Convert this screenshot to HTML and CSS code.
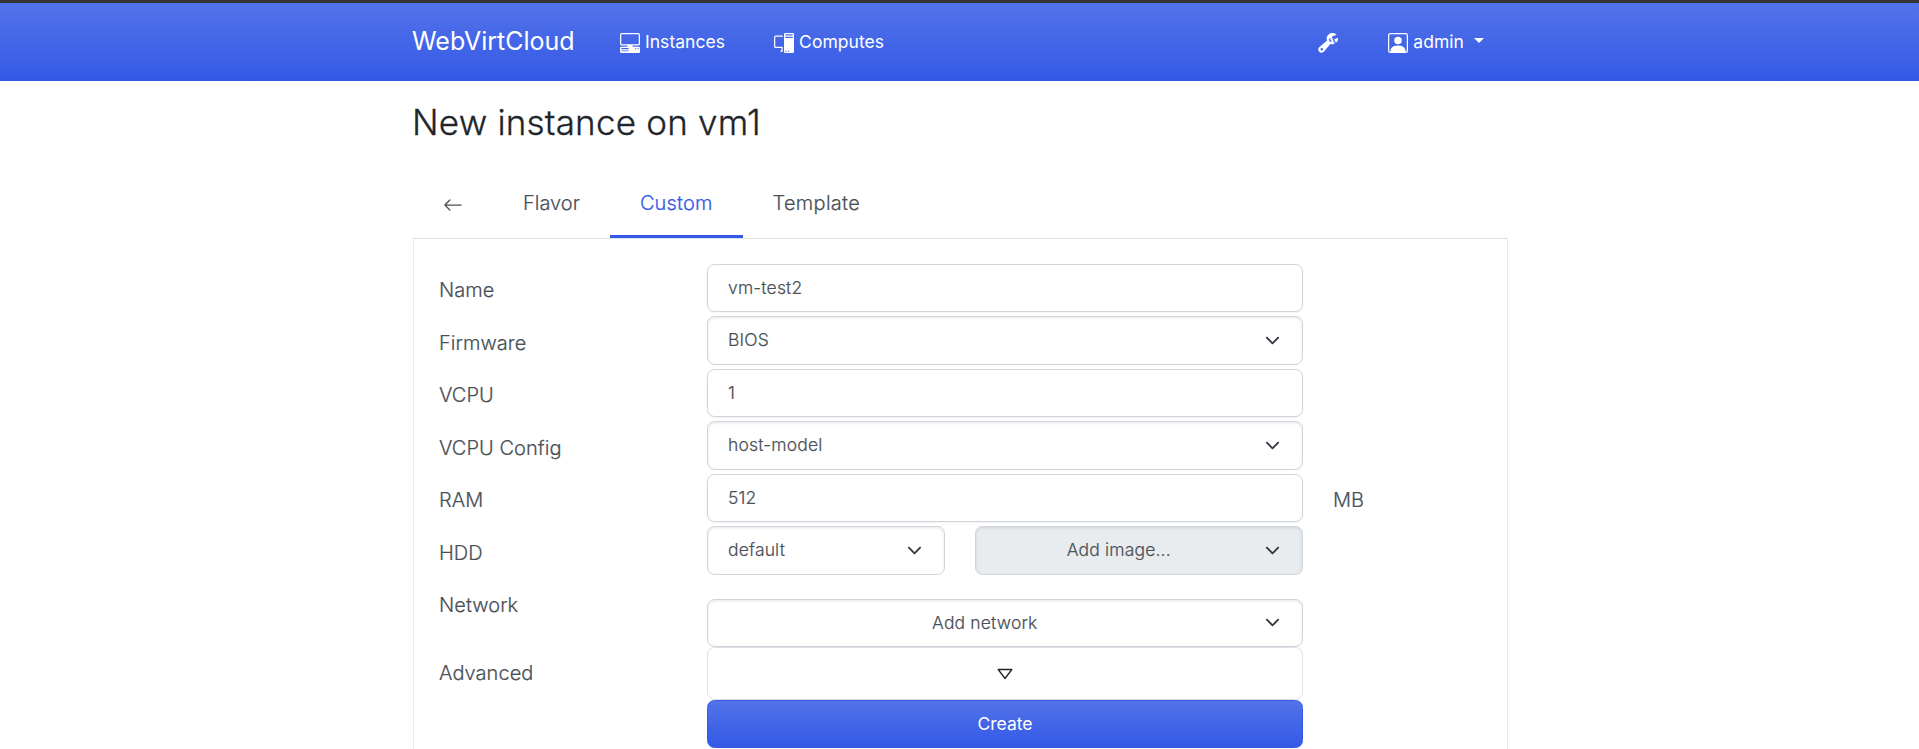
FILE: index.html
```
<!DOCTYPE html>
<html lang="en">
<head>
<meta charset="utf-8">
<title>WebVirtCloud</title>
<link rel="stylesheet" href="styles.css">
</head>
<body>
<svg class="defs" width="0" height="0">
  <symbol id="chevron" viewBox="0 0 16 16"><path fill="none" stroke="#343a40" stroke-linecap="round" stroke-linejoin="round" stroke-width="2" d="m2 5 6 6 6-6"/></symbol>
</svg>
<nav class="navbar">
  <div class="container nav-inner">
    <a class="brand">WebVirtCloud</a>
    <a class="nav-item">
      <svg class="icon" viewBox="0 0 16 16" fill="currentColor"><path d="M1.500 0A1.500 1.500 0 0 0 0 1.500v7A1.500 1.500 0 0 0 1.500 10H6v1H1a1 1 0 0 0-1 1v3a1 1 0 0 0 1 1h14a1 1 0 0 0 1-1v-3a1 1 0 0 0-1-1h-5v-1h4.500A1.500 1.500 0 0 0 16 8.500v-7A1.500 1.500 0 0 0 14.500 0zm0 1h13a.5.5 0 0 1 .5.5v7a.5.5 0 0 1-.5.5h-13a.5.5 0 0 1-.5-.5v-7a.5.5 0 0 1 .5-.5M12 12.500a.5.5 0 1 1 1 0 .5.5 0 0 1-1 0m2 0a.5.5 0 1 1 1 0 .5.5 0 0 1-1 0M1.500 12h5a.5.5 0 0 1 0 1h-5a.5.5 0 0 1 0-1M1 14.250a.25.25 0 0 1 .25-.25h5.500a.25.25 0 1 1 0 .5h-5.500a.25.25 0 0 1-.25-.25"/></svg>
      <span>Instances</span>
    </a>
    <a class="nav-item">
      <svg class="icon" viewBox="0 0 16 16" fill="currentColor"><path d="M8 1a1 1 0 0 1 1-1h6a1 1 0 0 1 1 1v14a1 1 0 0 1-1 1H9a1 1 0 0 1-1-1zm1 13.500a.5.5 0 1 0 1 0 .5.5 0 0 0-1 0m2 0a.5.5 0 1 0 1 0 .5.5 0 0 0-1 0M9.500 1a.5.5 0 0 0 0 1h5a.5.5 0 0 0 0-1zM9 3.500a.5.5 0 0 0 .5.5h5a.5.5 0 0 0 0-1h-5a.5.5 0 0 0-.5.5M1.500 2A1.500 1.500 0 0 0 0 3.500v7A1.500 1.500 0 0 0 1.500 12H6v2h-.5a.5.5 0 0 0 0 1H7v-4H1.500a.5.5 0 0 1-.5-.5v-7a.5.5 0 0 1 .5-.5H7V2z"/></svg>
      <span>Computes</span>
    </a>
    <a class="nav-item tools">
      <svg class="icon" viewBox="0 0 16 16" fill="currentColor"><path d="M16 4.500a4.500 4.500 0 0 1-1.703 3.526L13 5l2.959-1.110q.04.3.041.61"/><path d="M11.500 9c.653 0 1.273-.139 1.833-.39L12 5.500 11 3l3.826-1.530A4.500 4.500 0 0 0 7.290 6.092l-6.116 5.096a2.583 2.583 0 1 0 3.638 3.638L9.908 8.710A4.500 4.500 0 0 0 11.500 9m-1.292-4.361-.596.893.809-.270a.25.25 0 0 1 .287.377l-.596.893.809-.270.158.475-1.500.5a.25.25 0 0 1-.287-.376l.596-.893-.809.270a.25.25 0 0 1-.287-.377l.596-.893-.809.270-.158-.475 1.500-.5a.25.25 0 0 1 .287.376M3 14a1 1 0 1 1 0-2 1 1 0 0 1 0 2"/></svg>
    </a>
    <a class="nav-item">
      <svg class="icon" viewBox="0 0 16 16" fill="currentColor"><path d="M11 6a3 3 0 1 1-6 0 3 3 0 0 1 6 0"/><path d="M2 0a2 2 0 0 0-2 2v12a2 2 0 0 0 2 2h12a2 2 0 0 0 2-2V2a2 2 0 0 0-2-2zm12 1a1 1 0 0 1 1 1v12a1 1 0 0 1-1 1v-1c0-1-1-4-6-4s-6 3-6 4v1a1 1 0 0 1-1-1V2a1 1 0 0 1 1-1z"/></svg>
      <span>admin</span><i class="caret"></i>
    </a>
  </div>
</nav>
<main class="container">
  <h1 class="title">New instance on vm1</h1>
  <ul class="tabs">
    <li class="tab back"><svg class="icon" viewBox="0 0 16 16" fill="currentColor"><path fill-rule="evenodd" d="M15 8a.5.5 0 0 0-.5-.5H2.707l3.147-3.146a.5.5 0 1 0-.708-.708l-4 4a.5.5 0 0 0 0 .708l4 4a.5.5 0 0 0 .708-.708L2.707 8.500H14.500A.5.5 0 0 0 15 8"/></svg></li>
    <li class="tab">Flavor</li>
    <li class="tab active">Custom</li>
    <li class="tab">Template</li>
  </ul>
  <form class="panel">
    <div class="row"><label>Name</label><div class="control">vm-test2</div></div>
    <div class="row"><label>Firmware</label><div class="control select"><span>BIOS</span><svg class="chevron"><use href="#chevron"/></svg></div></div>
    <div class="row"><label>VCPU</label><div class="control">1</div></div>
    <div class="row"><label>VCPU Config</label><div class="control select"><span>host-model</span><svg class="chevron"><use href="#chevron"/></svg></div></div>
    <div class="row"><label>RAM</label><div class="control">512</div><span class="unit">MB</span></div>
    <div class="row"><label>HDD</label>
      <div class="split">
        <div class="control select"><span>default</span><svg class="chevron"><use href="#chevron"/></svg></div>
        <div class="control select centered disabled"><span>Add image...</span><svg class="chevron"><use href="#chevron"/></svg></div>
      </div>
    </div>
    <div class="row network"><label>Network</label><div class="control select centered"><span>Add network</span><svg class="chevron"><use href="#chevron"/></svg></div></div>
    <div class="row advanced"><label>Advanced</label>
      <div class="toggle"><svg class="triangle" viewBox="0 0 16 16"><path d="M1.200 3.500h13.600L8 12.500z" fill="none" stroke="#212529" stroke-width="1.300" stroke-linejoin="round"/></svg></div>
    </div>
    <div class="row submit"><span></span><div class="create">Create</div></div>
  </form>
</main>
</body>
</html>
```
FILE: styles.css
```
* { box-sizing: border-box; }
html { font-size: 20px; overflow: hidden; }
body {
  margin: 0;
  height: 749px;
  overflow: hidden;
  font-family: Inter, "Liberation Sans", sans-serif;
  font-weight: 300;
  line-height: 1.5;
  color: #495057;
  background: #fff;
}
.defs { display: block; height: 0; }
.container { width: 1095px; margin-left: 413px; }
.navbar {
  height: 81px;
  border-top: 3px solid #343434;
  background: linear-gradient(180deg, #5273e9, #3459e6);
  color: #fff;
}
.nav-inner { display: flex; align-items: center; height: 78px; }
.brand { font-size: 25px; font-weight: 400; width: 207px; margin-left: -1px; }
.nav-item {
  display: flex;
  align-items: center;
  gap: 5px;
  font-size: 17.5px;
  font-weight: 400;
  letter-spacing: 0.04px;
  margin-right: 49px;
}
.nav-inner .brand + .nav-item { margin-left: 1px; }
.icon { display: block; width: 20px; height: 20px; position: relative; top: 1px; }
.tools { margin-left: auto; }
.nav-inner .tools { margin-right: 50px; }
.nav-item:last-child { margin-right: 24px; }
.caret {
  margin-left: 5px;
  border-top: 5px solid #fff;
  border-left: 5px solid transparent;
  border-right: 5px solid transparent;
  position: relative;
  top: -2px;
}
.title {
  margin: 20px 0 0 -1px;
  height: 43px;
  line-height: 43px;
  font-size: 35px;
  font-weight: 300;
  letter-spacing: 0.2px;
  -webkit-text-stroke: 0.3px;
  color: #212529;
}
.tabs {
  display: flex;
  list-style: none;
  margin: 28px 0 0;
  padding: 0;
  height: 67px;
  border-bottom: 1px solid #dee2e6;
}
.tab {
  padding: 16px 30px 0;
  height: 66px;
  border-bottom: 3px solid transparent;
  letter-spacing: 0.15px;
  -webkit-text-stroke: 0.2px;
}
.tab:nth-child(2) { letter-spacing: 0; }
.tab:last-child { letter-spacing: 0.28px; }
.back .icon { top: 7px; }
.active { color: #3459e6; border-color: #3459e6; }
.panel {
  height: 530px;
  padding: 25px 25px 0;
  border: 1px solid #e9ecef;
  border-top: 0;
}
.row { display: grid; grid-template-columns: 268px 596px 1fr; align-items: start; height: 52.5px; }
.row label { padding-top: 11px; letter-spacing: 0.05px; -webkit-text-stroke: 0.2px; }
.unit { padding: 11px 0 0 30px; -webkit-text-stroke: 0.2px; }
.control {
  display: flex;
  align-items: center;
  height: 48px;
  padding: 0 20px;
  font-size: 17.5px;
  letter-spacing: 0.15px;
  -webkit-text-stroke: 0.2px;
  border: 1px solid #ced4da;
  border-radius: 7.5px;
  box-shadow: 0 1px 2px rgba(0, 0, 0, .05);
}
.select { height: 49px; margin-top: -0.500px; padding-bottom: 1px; box-shadow: inset 0 1px 3px rgba(0, 0, 0, .1); }
.select span { flex: 1; }
.chevron { width: 15px; height: 15px; margin: 1px 2.500px 0 0; }
.centered span { text-align: center; padding-right: 23px; }
.split { display: grid; grid-template-columns: 238px 328px; gap: 30px; }
.disabled { background: #e9ecef; }
.network { height: 68px; }
.network .control { height: 48px; margin-top: 20px; padding-bottom: 0; }
.network .chevron { margin-top: -1px; }
.advanced { height: 53px; }
.toggle {
  display: flex;
  align-items: center;
  justify-content: center;
  height: 53px;
  border: 1px solid #dee2e6;
  border-radius: 7.5px;
}
.triangle { width: 16px; height: 16px; }
.submit { height: 48px; }
.create {
  height: 48px;
  line-height: 46px;
  text-align: center;
  font-size: 17.5px;
  font-weight: 400;
  color: #fff;
  background: linear-gradient(180deg, #5273e9, #3459e6);
  border: 1px solid #3459e6;
  border-radius: 7.5px;
}
```
